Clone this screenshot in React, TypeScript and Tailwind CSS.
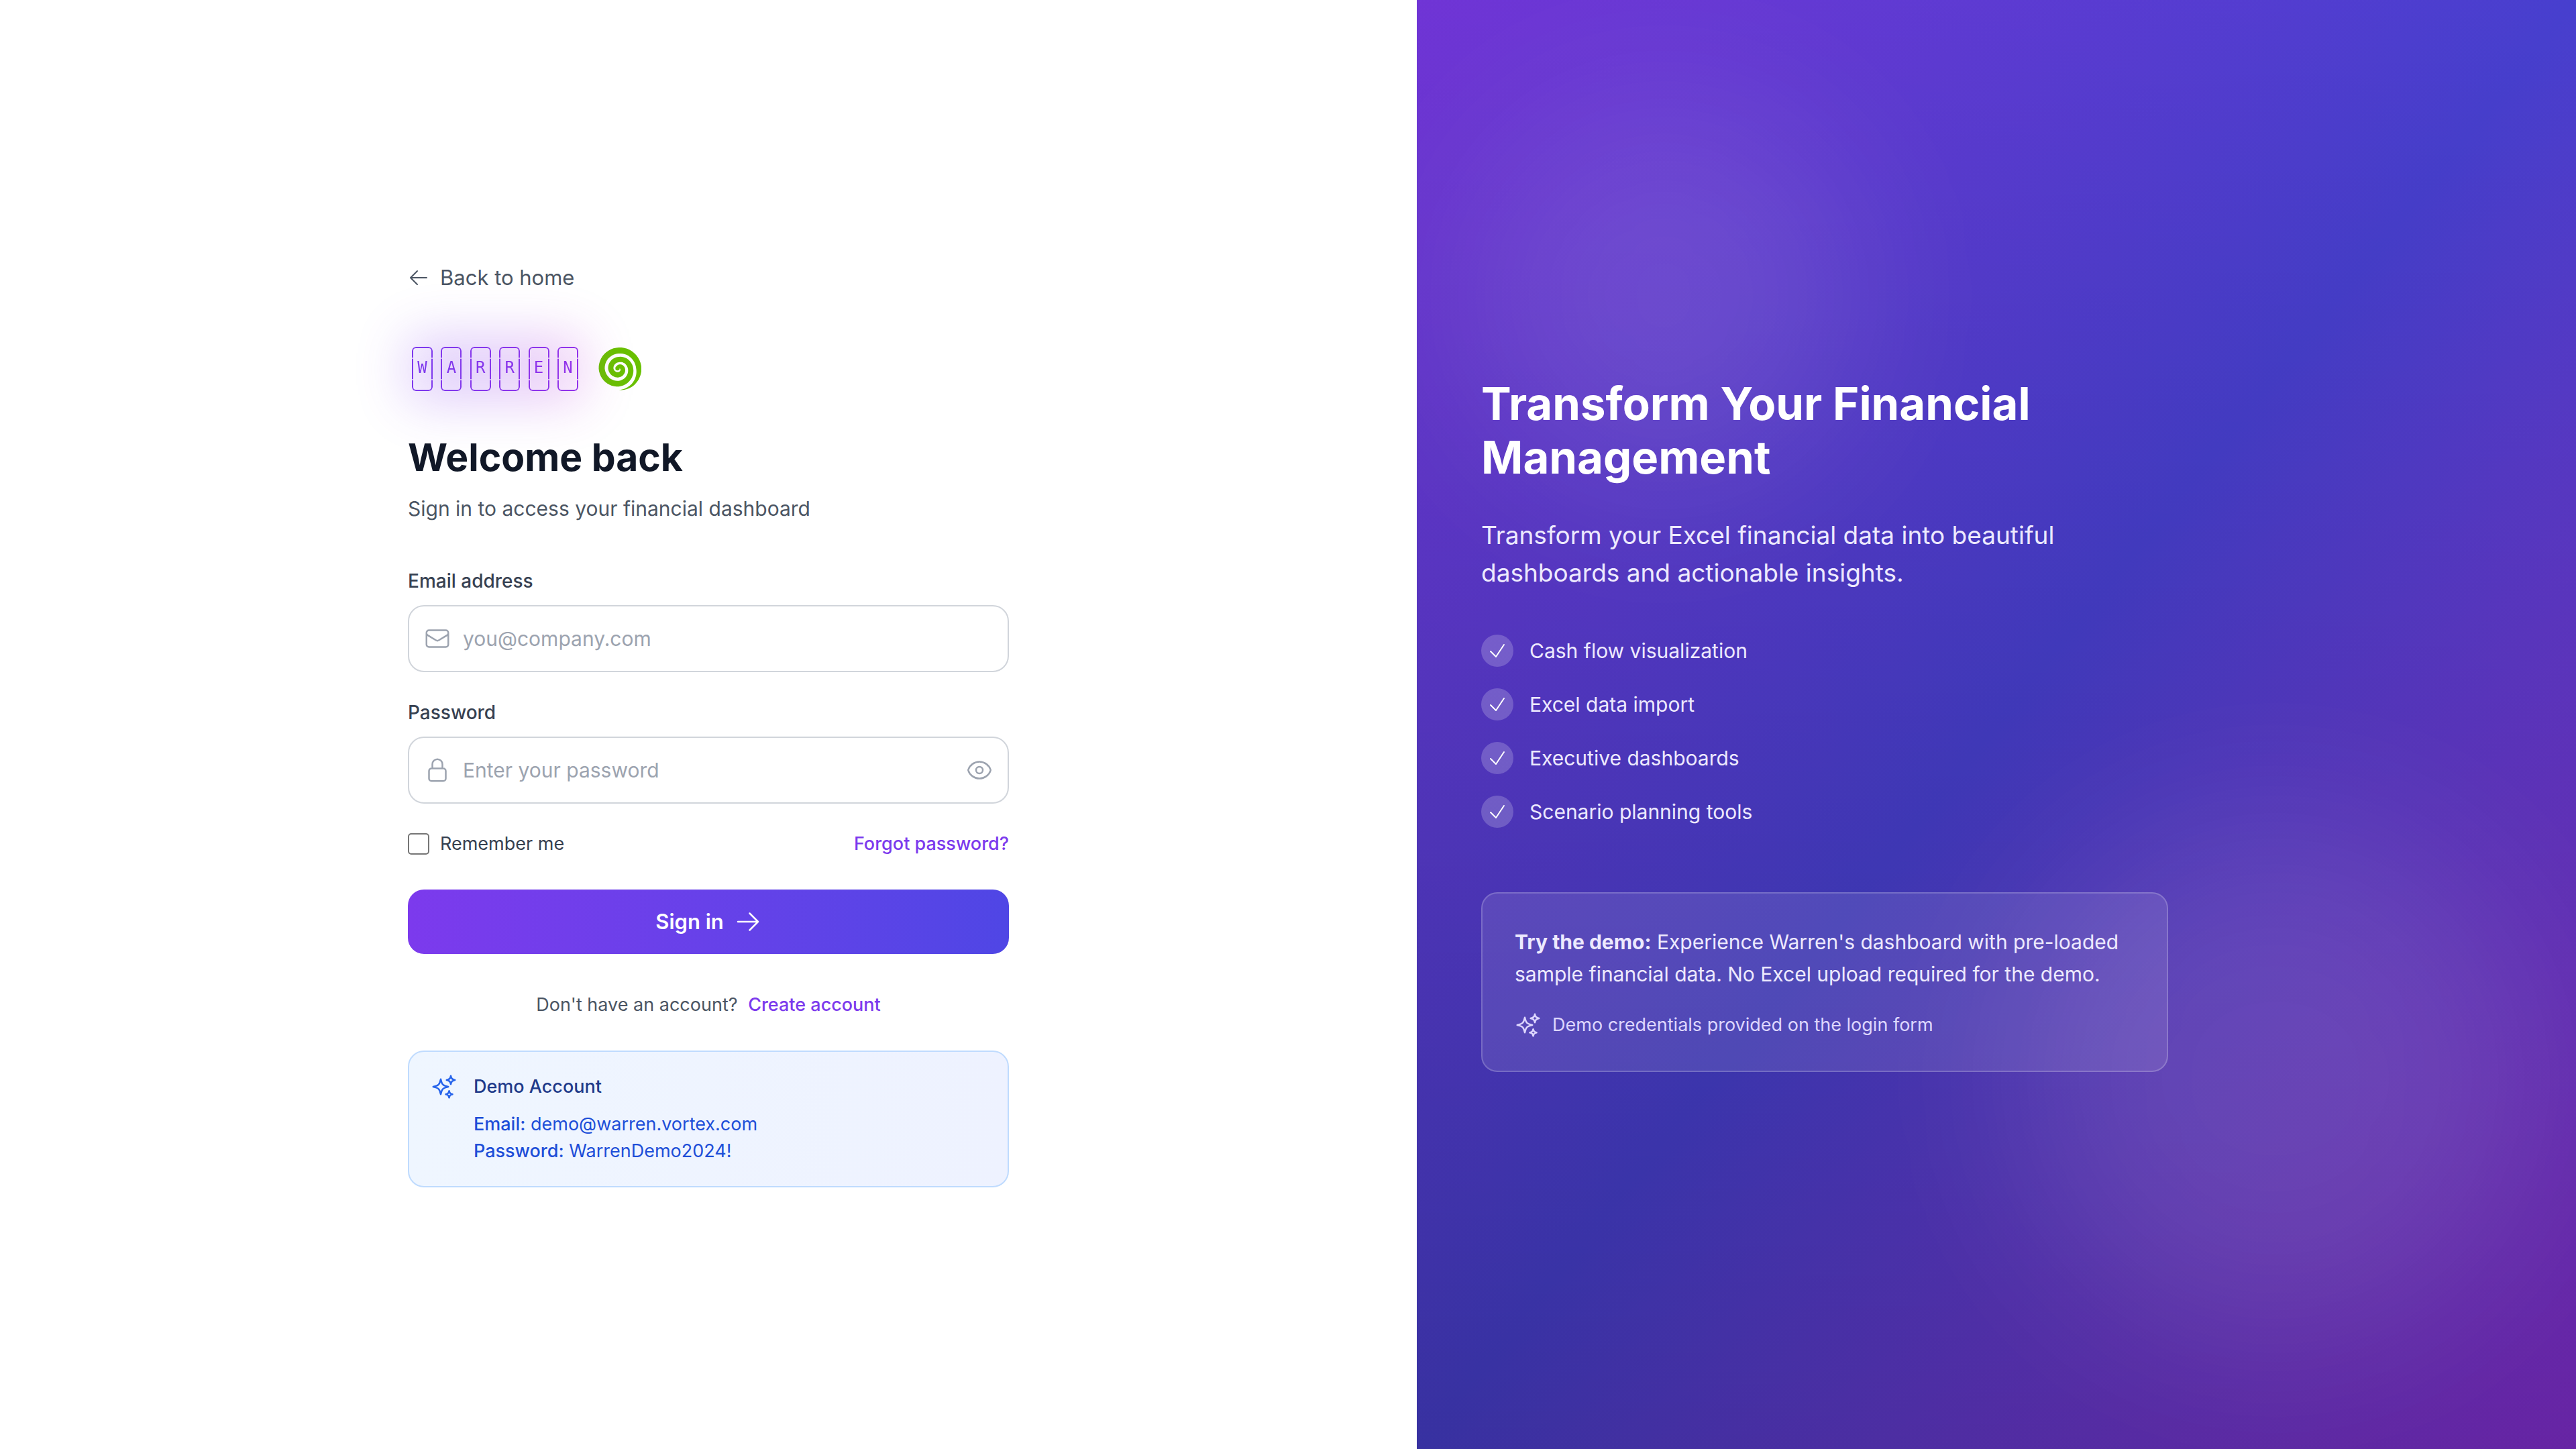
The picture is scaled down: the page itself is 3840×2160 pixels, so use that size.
import React from "react";
import {
  HiOutlineArrowLeft,
  HiOutlineArrowRight,
  HiOutlineCheck,
  HiOutlineEnvelope,
  HiOutlineEye,
  HiOutlineLockClosed,
  HiOutlineSparkles,
} from "react-icons/hi2";

const features = [
  "Cash flow visualization",
  "Excel data import",
  "Executive dashboards",
  "Scenario planning tools",
];

const letters = [
  { char: "W", color: "text-[#7e39ed]" },
  { char: "A", color: "text-[#8238ec]" },
  { char: "R", color: "text-[#8637ec]" },
  { char: "R", color: "text-[#8a35eb]" },
  { char: "E", color: "text-[#8e34eb]" },
  { char: "N", color: "text-[#9233ea]" },
];

// Spiral arm as [turns from the tail, radius of the centre line, arm width].
const arm = [
  [0, 32, 0],
  [0.12, 31.5, 4],
  [0.25, 29.8, 8],
  [0.5, 27, 9],
  [0.75, 25.5, 9],
  [1, 22.5, 8.5],
  [1.25, 17.5, 8],
  [1.5, 13.5, 8],
  [1.75, 12, 8],
  [2, 9, 8],
  [2.25, 5.5, 7.5],
  [2.5, 2.5, 7],
  [2.62, 2, 6],
];

function spiralPath() {
  const outer: string[] = [];
  const inner: string[] = [];
  for (let i = 0; i < arm.length - 1; i++) {
    const [t0, r0, w0] = arm[i];
    const [t1, r1, w1] = arm[i + 1];
    for (let k = 0; k < 12; k++) {
      const f = k / 12;
      const a = (t0 + (t1 - t0) * f) * 2 * Math.PI;
      const r = r0 + (r1 - r0) * f;
      const h = (w0 + (w1 - w0) * f) / 2;
      const at = (d: number) => `${(30.5 + Math.sin(a) * d).toFixed(2)} ${(31.5 + Math.cos(a) * d).toFixed(2)}`;
      outer.push(at(r + h));
      inner.unshift(at(r - h));
    }
  }
  return `M${outer.join("L")}L${inner.join("L")}Z`;
}

function Spiral() {
  return (
    <svg viewBox="0 0 64 64" className="size-16" fill="#69c000" aria-hidden="true">
      <path d={spiralPath()} />
      <circle cx="28.5" cy="31" r="3.2" />
    </svg>
  );
}

function Logo() {
  return (
    <div className="flex items-center gap-6">
      <div className="relative">
        <div className="absolute inset-0 bg-linear-to-r from-[#7c3aed] via-[#8b35ec] to-[#c026d3] opacity-25 blur-[40px]" />
        <div className="relative flex h-24 w-65 items-center justify-between px-1.5 font-['DejaVu_Sans_Mono',monospace] text-2xl">
          {letters.map(({ char, color }, i) => (
            <span
              key={i}
              className={`${color} flex h-[66px] w-[31px] items-center justify-center rounded-md border-2 border-current pb-1 leading-none [mask-image:linear-gradient(to_bottom,#000_16px,#0004_16px,#0004_18px,#000_18px,#000_48px,#0004_48px,#0004_50px,#000_50px)]`}
            >
              {char}
            </span>
          ))}
        </div>
      </div>
      <Spiral />
    </div>
  );
}

export default function App() {
  return (
    <div className="flex min-h-screen bg-white font-['Inter',sans-serif] text-[30px] leading-12">
      <main className="flex w-[55%] items-center justify-center">
        <div className="w-full max-w-4xl">
          <a href="#home" className="flex w-fit items-center gap-4 text-[31px] text-[#4b5563]">
            <HiOutlineArrowLeft className="size-8" />
            Back to home
          </a>
          <div className="mt-16">
            <Logo />
          </div>
          <h1 className="mt-12 text-[57px] leading-18 font-bold text-[#111827]">Welcome back</h1>
          <p className="mt-4 text-[#4b5563]">Sign in to access your financial dashboard</p>

          <form className="mt-16" onSubmit={(e) => e.preventDefault()}>
            <label htmlFor="email" className="block text-[28px] leading-10 font-medium text-[#374151]">
              Email address
            </label>
            <div className="relative mt-4">
              <HiOutlineEnvelope className="pointer-events-none absolute inset-y-0 left-6 my-auto size-10 text-[#9ca3af]" />
              <input
                id="email"
                type="email"
                placeholder="you@company.com"
                className="block w-full rounded-3xl border-2 border-[#d1d5db] py-6 pr-6 pl-20 leading-12 text-[#111827] placeholder:text-[#9ca3af]"
              />
            </div>

            <label htmlFor="password" className="mt-10 block text-[28px] leading-10 font-medium text-[#374151]">
              Password
            </label>
            <div className="relative mt-4">
              <HiOutlineLockClosed className="pointer-events-none absolute inset-y-0 left-6 my-auto size-10 text-[#9ca3af]" />
              <input
                id="password"
                type="password"
                placeholder="Enter your password"
                className="block w-full rounded-3xl border-2 border-[#d1d5db] py-6 pr-20 pl-20 leading-12 text-[#111827] placeholder:text-[#9ca3af]"
              />
              <button type="button" aria-label="Show password" className="absolute inset-y-0 right-6 text-[#9ca3af]">
                <HiOutlineEye className="size-10" />
              </button>
            </div>

            <div className="mt-10 flex items-center justify-between text-[27px] leading-10">
              <label htmlFor="remember" className="flex items-center gap-4 text-[#374151]">
                <input
                  id="remember"
                  type="checkbox"
                  className="size-8 appearance-none rounded-[5px] border-2 border-[#767676] bg-white checked:bg-[#7c3aed]"
                />
                Remember me
              </label>
              <a href="#forgot" className="font-medium text-[#7c3aed]">
                Forgot password?
              </a>
            </div>

            <button
              type="submit"
              className="mt-12 flex w-full items-center justify-center gap-4 rounded-3xl bg-linear-to-r from-[#7c3aed] to-[#4f46e5] py-6 text-[31px] font-semibold text-white"
            >
              Sign in
              <HiOutlineArrowRight className="size-10" />
            </button>
          </form>

          <p className="mt-14 text-center text-[27px] leading-10 text-[#4b5563]">
            Don't have an account?{" "}
            <a href="#create" className="ml-2 font-medium text-[#7c3aed]">
              Create account
            </a>
          </p>

          <section className="mt-12 flex gap-6 rounded-3xl border-2 border-[#bfdbfe] bg-linear-to-r from-[#eff6ff] to-[#eef2ff] p-8 text-[27px] leading-10 text-[#1d4ed8]">
            <HiOutlineSparkles className="size-10 text-[#2563eb]" />
            <div>
              <h2 className="font-medium text-[#1e3a8a]">Demo Account</h2>
              <p className="mt-4">
                <span className="font-medium">Email:</span> demo@warren.vortex.com
              </p>
              <p>
                <span className="font-medium">Password:</span> WarrenDemo2024!
              </p>
            </div>
          </section>
        </div>
      </main>

      <aside className="relative flex w-[45%] items-center overflow-hidden bg-linear-to-br from-[#7c3aed] via-[#4f46e5] to-[#9333ea] px-24">
        <div className="absolute inset-0 bg-linear-to-b from-black/10 to-black/30" />
        <div className="absolute top-38 left-20 size-[576px] rounded-full bg-white/10 blur-[128px]" />
        <div className="absolute right-16 bottom-42 size-[768px] rounded-full bg-white/10 blur-[128px]" />
        <div className="relative w-full max-w-5xl text-[#ede9fe]">
          <h2 className="text-[67px] leading-20 font-bold text-white">
            Transform Your Financial
            <br />
            Management
          </h2>
          <p className="mt-12 max-w-4xl text-[37px] leading-14">
            Transform your Excel financial data into beautiful dashboards and actionable insights.
          </p>
          <ul className="mt-16 flex flex-col gap-8">
            {features.map((feature) => (
              <li key={feature} className="flex items-center gap-6">
                <span className="flex size-12 items-center justify-center rounded-full bg-white/20 text-white">
                  <HiOutlineCheck className="size-8" />
                </span>
                {feature}
              </li>
            ))}
          </ul>
          <div className="mt-24 rounded-3xl border-2 border-white/20 bg-white/10 p-12">
            <p>
              <strong className="font-bold">Try the demo:</strong> Experience Warren's dashboard with pre-loaded sample
              financial data. No Excel upload required for the demo.
            </p>
            <p className="mt-8 flex items-center gap-4 text-[27px] leading-10 text-[#ddd6fe]">
              <HiOutlineSparkles className="size-10" />
              Demo credentials provided on the login form
            </p>
          </div>
        </div>
      </aside>
    </div>
  );
}
